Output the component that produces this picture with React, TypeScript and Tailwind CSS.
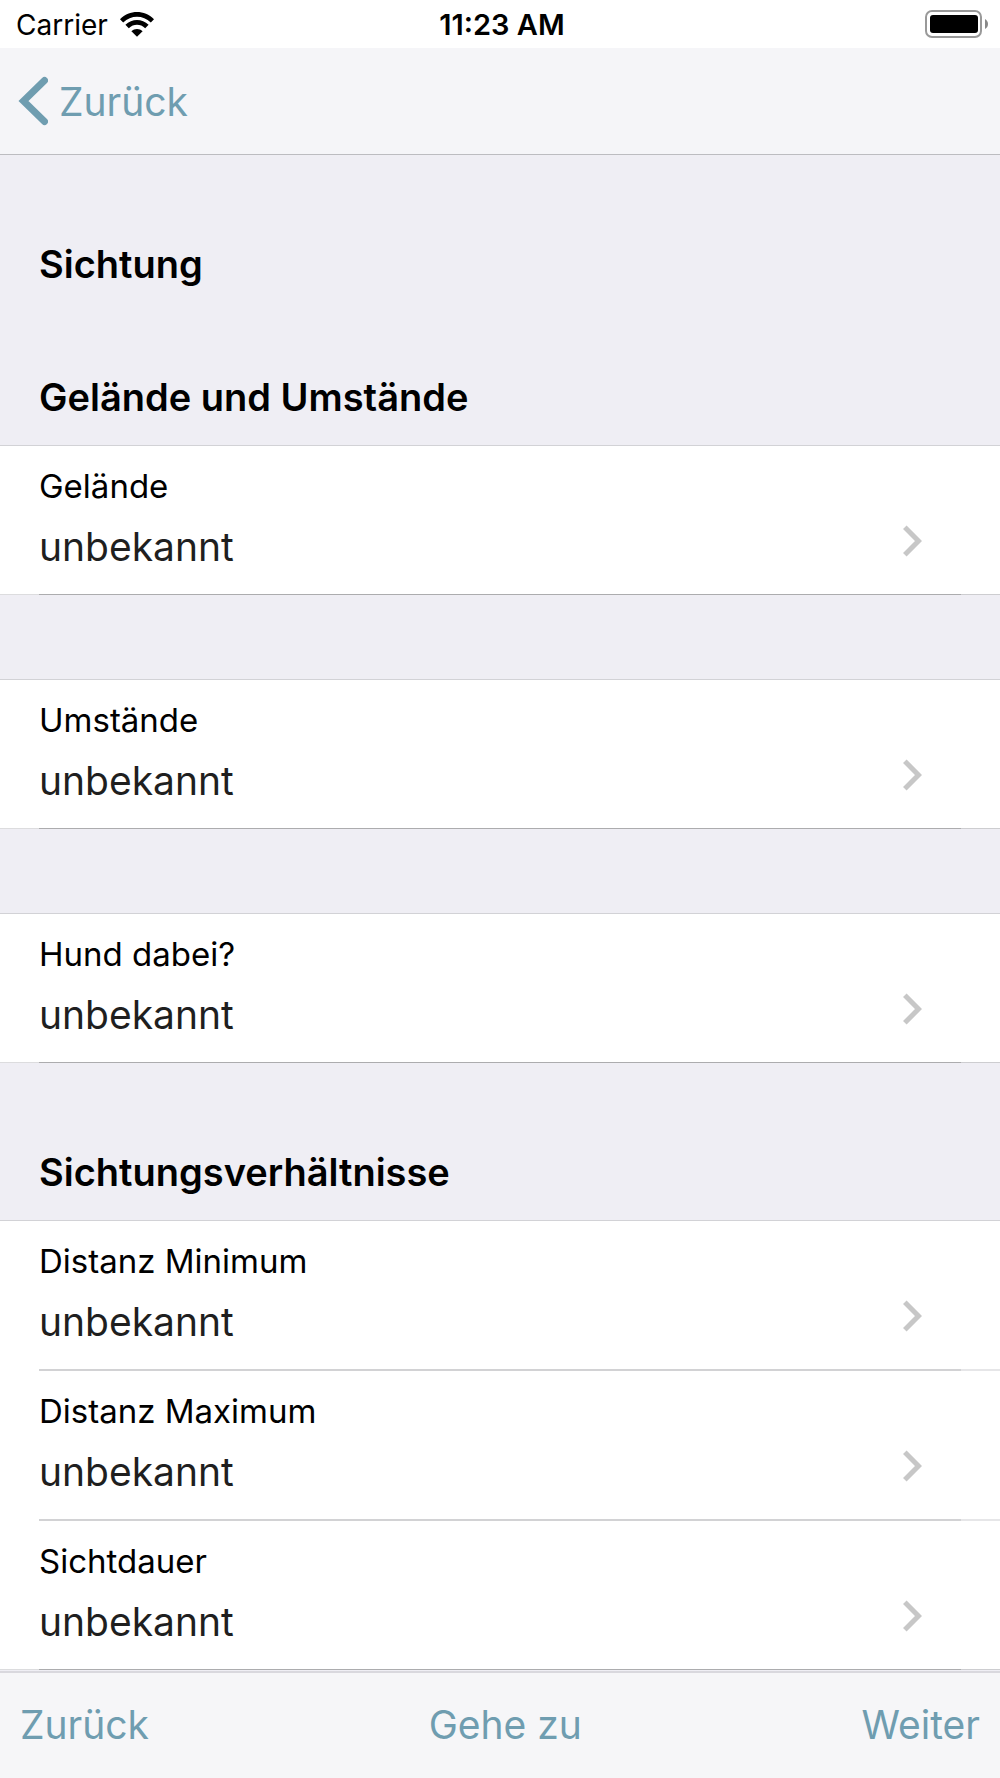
type Field = { label: string; value: string };

const terrainFields: Field[] = [
  { label: "Gelände", value: "unbekannt" },
  { label: "Umstände", value: "unbekannt" },
  { label: "Hund dabei?", value: "unbekannt" },
];

const sightingFields: Field[] = [
  { label: "Distanz Minimum", value: "unbekannt" },
  { label: "Distanz Maximum", value: "unbekannt" },
  { label: "Sichtdauer", value: "unbekannt" },
];

const StatusBar = () => (
  <div className="grid grid-cols-3 items-center h-12 bg-white pl-4 pr-3">
    <div className="flex items-center gap-3">
      <span className="pt-0.5 text-[28px] leading-8">Carrier</span>
      <svg width="34" height="25" viewBox="0 0 34 25">
        <path d="M0 7.2C9.5-2.4 24.5-2.4 34 7.2L30.8 10.4C23 2.8 11 2.8 3.2 10.4z" />
        <path d="M5.4 12.8C12 6.4 22 6.4 28.6 12.8L25.2 16.2C20.4 11.6 13.6 11.6 8.8 16.2z" />
        <path d="M17 24.8L11.4 19.2C14.6 16.2 19.4 16.2 22.6 19.2z" />
      </svg>
    </div>
    <span className="pt-0.5 text-center text-[29px] leading-8 font-semibold">11:23 AM</span>
    <svg className="justify-self-end" width="63" height="28" viewBox="0 0 63 28">
      <rect x="1" y="1" width="55" height="26" rx="6" fill="none" stroke="#999" strokeWidth="2" />
      <rect x="5" y="5" width="48" height="18" rx="3" fill="#000" />
      <path d="M60 9c4 2 4 8 0 10z" fill="#888" />
    </svg>
  </div>
);

const Divider = () => (
  <div className="flex h-px">
    <span className="w-[39px] bg-[#dcdcde]" />
    <span className="flex-1 bg-[#acacae]" />
    <span className="w-[39px] bg-[#cdcdd0]" />
  </div>
);

const InsetDivider = () => (
  <div className="flex h-0.5 bg-white pl-[39px]">
    <span className="flex-1 bg-[#d2d2d4]" />
    <span className="w-[39px] bg-[#e6e6e8]" />
  </div>
);

const FieldRow = ({ field }: { field: Field }) => (
  <button className="block w-full bg-white text-left pt-5 pb-[22px] pl-[39px] pr-[78px] cursor-pointer">
    <span className="block text-[33px] leading-10">{field.label}</span>
    <span className="mt-4 flex items-start justify-between">
      <span className="text-[39px] leading-[50px] text-[#1f1f1f]">{field.value}</span>
      <svg width="19" height="38" viewBox="0 0 19 38" fill="none" stroke="#c7c7c7" strokeWidth="5">
        <path d="M1.8 5.2L15.5 19L1.8 32.8" />
      </svg>
    </span>
  </button>
);

const SectionTitle = ({ title }: { title: string }) => (
  <h2 className="pt-[85px] pl-[39px] text-[38px] leading-12 font-semibold">{title}</h2>
);

export default function App() {
  return (
    <div className="flex min-h-screen flex-col bg-[#efeef4] font-['Inter',sans-serif] text-black">
      <StatusBar />
      <header className="flex h-[107px] items-center border-b border-[#bcbcc0] bg-[#f5f5f8] pl-[18px]">
        <button className="flex items-center gap-[11px] text-[#6f9db0] cursor-pointer">
          <svg width="30" height="50" viewBox="0 0 30 50" fill="none" stroke="currentColor" strokeWidth="7">
            <path d="M26.5 4.5L5.5 25L26.5 45.5" strokeLinecap="round" />
          </svg>
          <span className="pt-0.5 text-[39px] leading-[50px]">Zurück</span>
        </button>
      </header>

      <main className="flex-1">
        <SectionTitle title="Sichtung" />
        <div className="pb-6">
          <SectionTitle title="Gelände und Umstände" />
        </div>
        <div className="flex flex-col gap-[84px]">
          {terrainFields.map((field) => (
            <section key={field.label} className="border-t border-[#d2d2d6]">
              <FieldRow field={field} />
              <Divider />
            </section>
          ))}
        </div>

        <div className="pb-6">
          <SectionTitle title="Sichtungsverhältnisse" />
        </div>
        <section className="border-t border-[#d2d2d6]">
          {sightingFields.map((field, i) => (
            <div key={field.label}>
              <FieldRow field={field} />
              {i < sightingFields.length - 1 ? <InsetDivider /> : <Divider />}
            </div>
          ))}
        </section>
      </main>

      <footer className="flex h-[107px] items-center justify-between border-t-2 border-[#d9d8de] bg-[#f6f6f8] px-5 pb-0.5 text-[39px] leading-[50px] text-[#6f9db0]">
        <button className="cursor-pointer">Zurück</button>
        <button className="cursor-pointer">Gehe zu</button>
        <button className="cursor-pointer">Weiter</button>
      </footer>
    </div>
  );
}
